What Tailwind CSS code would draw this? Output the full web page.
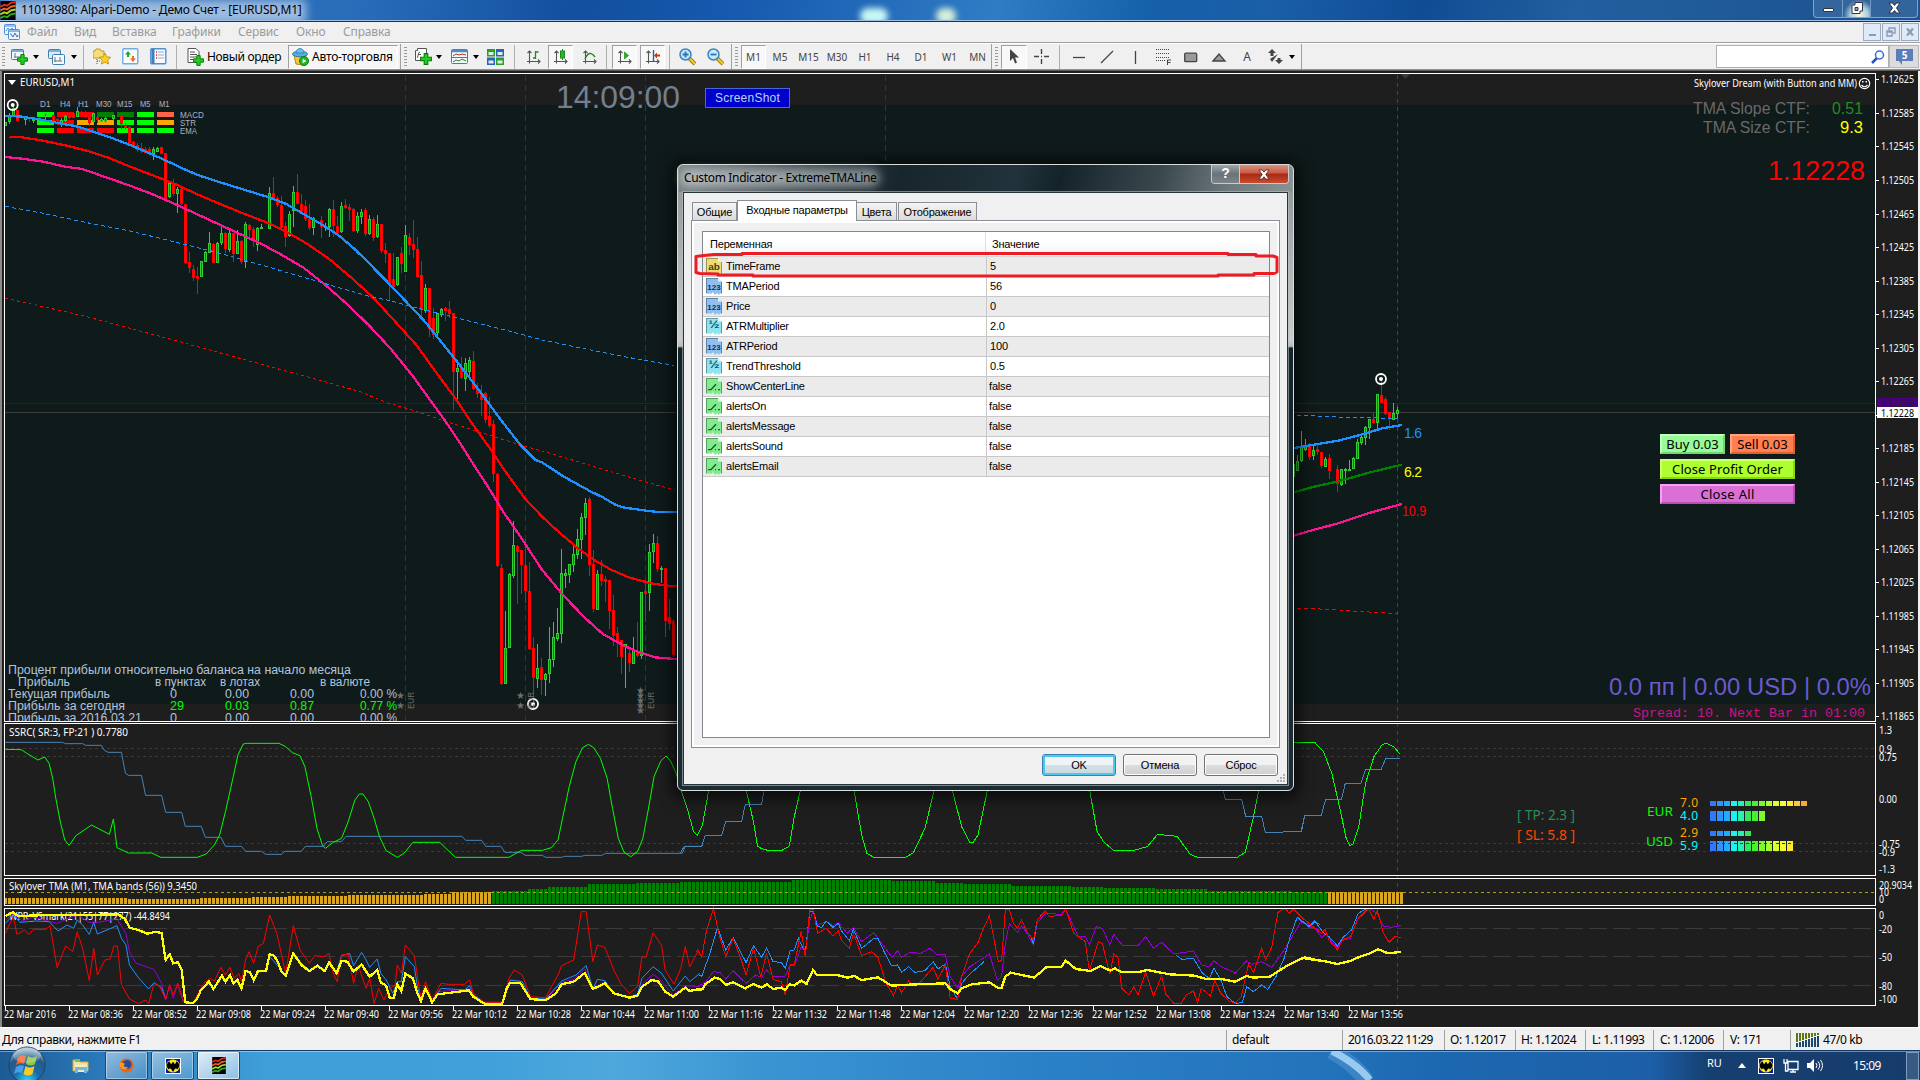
<!DOCTYPE html>
<html lang="ru">
<head>
  <meta charset="UTF-8" />
  <meta name="viewport" content="width=device-width, initial-scale=1" />
  <title>11013980: Alpari-Demo - Демо Счет - [EURUSD,M1]</title>
  <script src="https://cdn.jsdelivr.net/npm/@tailwindcss/browser@4"></script>
</head>
<body class="w-[1920px] h-[1080px] overflow-hidden bg-[#f0f0f0] font-['Noto_Sans',sans-serif] text-[12px] leading-none text-black relative">

  <!-- shared symbols -->
  <svg class="hidden">
    <symbol id="plus" viewBox="0 0 10 10"><path d="M3.5.5h3v3h3v3h-3v3h-3v-3h-3v-3h3z" fill="#1fd01f" stroke="#0a7a0a" stroke-width=".9"/></symbol>
    <symbol id="mt" viewBox="0 0 16 20"><rect width="16" height="20" fill="#000"/><g fill="none" stroke-width="2"><path d="M0 6l4-2 3 1 4-3 5-1" stroke="#e02a1a"/><path d="M0 10l4-2 3 1 4-3 5-1" stroke="#f0642a"/><path d="M0 14l4-2 3 1 4-3 5-1" stroke="#a8d820"/><path d="M0 18l4-2 3 1 4-3 5-1" stroke="#2fae20"/></g></symbol>
    <symbol id="bat" viewBox="0 0 16 16"><rect width="16" height="16" fill="#fff"/><rect x="1" y="1" width="14" height="14" fill="#16168c"/><rect x=".5" y=".5" width="15" height="15" fill="none" stroke="#fff" stroke-dasharray="1 1"/><ellipse cx="8" cy="8" rx="7" ry="6.500" fill="#f2ea28"/><path d="M1.500 7C2.500 4.500 4 3.500 5 3.500 4.500 5.500 6 6 7 5.500V4l1 .8L9 4v1.500C10 6 11.500 5.500 11 3.500 12 3.500 13.500 4.500 14.500 7 14.500 9 13 11 12 11.500 12 10 10 10 9.500 11.500L8 14 6.500 11.500C6 10 4 10 4 11.500 3 11 1.500 9 1.500 7z" fill="#000"/></symbol>
    <symbol id="axes" viewBox="0 0 16 16"><path d="M3.500 14.500V2M1.500 4l2-2 2 2M1 12.500h13M12 10.500l2 2-2 2" fill="none" stroke="#555" stroke-width="1.100"/></symbol>
    <symbol id="sheet" viewBox="0 0 16 19"><path d="M0 0h12l4 4v14l-2-1-1 2-2-2-2 2-2-3-2 2-2-1-1 1-2-1z" fill="currentColor"/><path d="M.5 17V.5H12M15.500 4.500V17" fill="none" stroke="#000" stroke-opacity=".35"/><path d="M12 0v4h4z" fill="#fff" fill-opacity=".75"/></symbol>
  </svg>

  <!-- title bar -->
  <header class="h-[20px] flex items-center justify-between relative overflow-hidden bg-gradient-to-r from-[#2a6ab8] via-[#2a74bd] to-[#1f5796]">
    <div class="absolute inset-0 bg-[linear-gradient(100deg,transparent_18%,#124f9e_30%,#1659ae_38%,#2f7cc4_52%,#1560a8_60%,#1a5fa8_66%,#0f4c94_74%,#225f9e_82%,#1c5290_100%)]"></div>
    <div class="absolute left-[860px] top-[8px] w-[28px] h-[16px] rounded-full bg-[#c8f8f4] blur-[3px]"></div>
    <div class="absolute left-[936px] top-[8px] w-[20px] h-[16px] rounded-full bg-[#d8f0d8] blur-[3px]"></div>
    <div class="absolute left-[2px] top-[0px] w-[304px] h-[24px] bg-[#b8d0ea]/80 blur-[5px]"></div>
    <div class="flex items-center relative">
      <svg class="w-[16px] h-[19px]"><use href="#mt"/></svg>
      <span class="ml-[5px] text-[12px] tracking-[-0.18px] whitespace-nowrap">11013980: Alpari-Demo - Демо Счет - [EURUSD,M1]</span>
    </div>
    <div class="relative flex self-start h-[18px] w-[105px] mr-[2px] border border-t-0 border-[#9fc0e4]/70 rounded-b bg-white/10">
      <div class="w-[29px] border-r border-[#9fc0e4]/60 flex justify-center"><i class="mt-[8px] w-[11px] h-[4px] bg-white border border-[#334] rounded-[1px]"></i></div>
      <div class="w-[28px] border-r border-[#9fc0e4]/60 flex justify-center bg-[radial-gradient(circle_at_60%_90%,#f4fbe0_0,#a8cce0_40%,transparent_70%)]"><svg class="w-[12px] h-[14px] mt-[1px]" viewBox="0 0 12 14"><path d="M4 1.500h7.500V10H9v2.500H1V4h3z" fill="#fff" stroke="#334"/><path d="M4 6.500h3v3H4z" fill="#8ab" stroke="#334"/></svg></div>
      <div class="flex-1 flex justify-center"><svg class="w-[13px] h-[12px] mt-[2px]" viewBox="0 0 13 12"><path d="M1 1h3.500l2 2.500L8.500 1H12L8.500 6l3.500 5H8.500l-2-2.500-2 2.500H1l3.500-5z" fill="#fff" stroke="#334"/></svg></div>
    </div>
  </header>
  <div class="h-px bg-[#9fbfe6]"></div>
  <div class="h-px bg-[#1c3250]"></div>

  <!-- menu -->
  <nav class="h-[20px] flex items-center text-[#9b9b9b] text-[12px] tracking-[-0.15px]">
    <svg class="w-[16px] h-[16px] ml-[4px] mr-[7px]" viewBox="0 0 16 16"><rect x=".5" y=".5" width="11" height="10" rx="1" fill="#eef5ff" stroke="#4d90d8"/><path d="M1 2h10M2 7l2-3 2 3 2-3 2 2" stroke="#4d90d8" fill="none"/><rect x="4.500" y="5.500" width="11" height="10" rx="1" fill="#eef5ff" stroke="#4d90d8"/><path d="M5 7h10M6 10h1l2 3 2-4 2 4 1-2" stroke="#2d78c8" fill="none"/></svg>
    <span class="w-[47px]">Файл</span><span class="w-[38px]">Вид</span><span class="w-[60px]">Вставка</span><span class="w-[66px]">Графики</span><span class="w-[58px]">Сервис</span><span class="w-[47px]">Окно</span><span class="w-[46px]">Справка</span>
    <div class="ml-auto flex gap-[1px] mr-[1px]">
      <div class="w-[18px] h-[18px] border border-[#9cabc0] bg-[#dfeaf8] flex items-end justify-center"><i class="w-[7px] h-[2px] bg-[#8a9bb0] mb-[4px]"></i></div>
      <div class="w-[18px] h-[18px] border border-[#9cabc0] bg-[#dfeaf8] flex items-center justify-center"><svg class="w-[10px] h-[10px]" viewBox="0 0 10 10" fill="none" stroke="#8a9bb0" stroke-width="1.400"><path d="M3 3V1h6v5H7M1 4h5v5H1zM1 5h5"/></svg></div>
      <div class="w-[18px] h-[18px] border border-[#9cabc0] bg-[#dfeaf8] flex items-center justify-center"><svg class="w-[8px] h-[8px]" viewBox="0 0 8 8" stroke="#8a9bb0" stroke-width="2.200"><path d="M1 .5l6 7M7 .5l-6 7"/></svg></div>
    </div>
  </nav>
  <div class="h-px bg-[#a0a0a0]"></div>
  <div class="h-px bg-white"></div>

  <!-- toolbar -->
  <div class="h-[25px] flex items-center text-[#333]">
    <i class="w-[3px] h-[20px] ml-[2px] mr-[6px] bg-[repeating-linear-gradient(#999_0_1px,transparent_1px_3px)]"></i>
    <div class="w-[37px] flex items-center"><svg class="w-[17px] h-[16px]" viewBox="0 0 17 16"><rect x=".5" y=".5" width="12" height="10" rx="1" fill="#f4f9ff" stroke="#3f7fae"/><path d="M1 2h11" stroke="#7ab0dc" stroke-width="2"/><path d="M4 4v5M3 8h7" stroke="#678"/><use href="#plus" x="6" y="5" width="11" height="11"/></svg><svg class="w-[6px] h-[4px] ml-[5px]" viewBox="0 0 6 4"><path d="M0 0h6L3 4z"/></svg></div>
    <div class="w-[35px] flex items-center"><svg class="w-[18px] h-[16px]" viewBox="0 0 18 16"><rect x=".5" y=".5" width="12" height="9" rx="1" fill="#dcebfa" stroke="#3f7fae"/><path d="M1 2h11" stroke="#7ab0dc" stroke-width="2"/><rect x="4.500" y="5.500" width="12" height="10" rx="1" fill="#f4f9ff" stroke="#3f7fae"/><path d="M7 8v5M6 12h8M12 8v4" stroke="#678"/></svg><svg class="w-[6px] h-[4px] ml-[5px]" viewBox="0 0 6 4"><path d="M0 0h6L3 4z"/></svg></div>
    <i class="w-px h-[24px] bg-[#b0b0b0] mr-[9px]"></i>
    <svg class="w-[18px] h-[18px] mr-[11px]" viewBox="0 0 18 18"><path d="M0 3h2l1-2h4l1 2h3v7H0z" fill="#f7dc78" stroke="#c09a28"/><path d="M4 11v5M4 13h3" stroke="#555" stroke-dasharray="1 1"/><path d="M12 5l1.800 3.800 4 .5-3 2.800.8 4L12 14.200 8.400 16.100l.8-4-3-2.800 4-.5z" fill="#fbd024" stroke="#c08a10" stroke-width=".8"/></svg>
    <svg class="w-[17px] h-[17px] mr-[11px]" viewBox="0 0 17 17"><rect x=".8" y=".8" width="15" height="15" rx="1" fill="#f8fbff" stroke="#6faee0" stroke-width="1.400"/><path d="M6 3L3 6.500h2V9h2V6.500h2z" fill="#23a823"/><path d="M11 14l3-3.500h-2V8h-2v2.500H8z" fill="#f06a20"/></svg>
    <svg class="w-[17px] h-[17px] mr-[9px]" viewBox="0 0 17 17"><rect x=".8" y=".8" width="15" height="15" rx="1" fill="#f8fbff" stroke="#4f8fd0" stroke-width="1.400"/><path d="M3 1v15" stroke="#3f7fc0" stroke-width="3"/><path d="M6 4h1M6 7h1M6 10h1" stroke="#e02020" stroke-width="1.500"/><path d="M8 4h6M8 7h6M8 10h6" stroke="#9ac"/></svg>
    <i class="w-px h-[24px] bg-[#b0b0b0] mr-[10px]"></i>
    <svg class="w-[17px] h-[18px] mr-[3px]" viewBox="0 0 17 18"><path d="M1 .5h8l3 3v11H1z" fill="#fff" stroke="#555"/><path d="M3 4h5M3 6.500h7M3 9h7M3 11.500h4" stroke="#555"/><use href="#plus" x="6" y="7" width="11" height="11"/></svg>
    <span class="w-[81px] text-black tracking-[-0.35px] whitespace-nowrap text-[12px]">Новый ордер</span>
    <div class="h-[24px] w-[110px] border border-[#a0a0a0] border-r-white border-b-white bg-[#f6f6f6] flex items-center pl-[3px]">
      <svg class="w-[17px] h-[18px] mr-[3px]" viewBox="0 0 17 18"><path d="M2 7l2 9 7 1 3-10z" fill="#f5c830" stroke="#b88a18"/><ellipse cx="8" cy="6" rx="7.500" ry="2.800" fill="#5aaede" stroke="#2b7ab0"/><path d="M4 5c0-6 8-6 8 0z" fill="#6cc0ea" stroke="#2b7ab0" stroke-width=".8"/><circle cx="12" cy="13" r="4.500" fill="#22b822" stroke="#0d7a0d"/><path d="M10.700 10.700v4.600l3.600-2.300z" fill="#fff"/></svg>
      <span class="text-black text-[12px] tracking-[-0.2px] whitespace-nowrap">Авто-торговля</span>
    </div>
    <i class="w-px h-[25px] bg-[#a0a0a0] ml-[2px] mr-[3px]"></i>
    <i class="w-[3px] h-[20px] mr-[8px] bg-[repeating-linear-gradient(#999_0_1px,transparent_1px_3px)]"></i>
    <div class="w-[36px] flex items-center"><svg class="w-[17px] h-[17px]" viewBox="0 0 17 17"><path d="M.500 2.500h2V.500h9v12h-11z" fill="#fff" stroke="#555"/><path d="M5 4c-2 0-2 6-3 6M3 6.500h3" stroke="#555" fill="none"/><use href="#plus" x="5" y="5" width="12" height="12"/></svg><svg class="w-[6px] h-[4px] ml-[4px]" viewBox="0 0 6 4"><path d="M0 0h6L3 4z"/></svg></div>
    <div class="w-[36px] flex items-center"><svg class="w-[17px] h-[16px]" viewBox="0 0 17 16"><rect x=".5" y=".5" width="16" height="14" rx="1" fill="#f4f9ff" stroke="#3f7fae"/><path d="M1 2h15" stroke="#4a90c8" stroke-width="2.500"/><path d="M2 7l3-2 3 1 3-1 4 1" stroke="#c02a1a" fill="none"/><path d="M1 8.500h15" stroke="#3f7fae"/><path d="M2 13l3-2 3 1 3-2 4 2" stroke="#208a20" fill="none"/></svg><svg class="w-[6px] h-[4px] ml-[5px]" viewBox="0 0 6 4"><path d="M0 0h6L3 4z"/></svg></div>
    <svg class="w-[17px] h-[16px] mr-[10px]" viewBox="0 0 17 16"><path d="M0 0h8v7.500H0zM9 8.500h8V16H9z" fill="#2aa02a"/><path d="M9 0h8v7.500H9zM0 8.500h8V16H0z" fill="#2a62c0"/><path d="M1.500 3h5v3h-5zM10.500 3h5v3h-5zM1.500 11.500h5v3h-5zM10.500 11.500h5v3h-5z" fill="#dff0e0"/></svg>
    <i class="w-px h-[24px] bg-[#b0b0b0] mr-[11px]"></i>
    <svg class="w-[16px] h-[16px] mr-[6px]" viewBox="0 0 16 16"><use href="#axes"/><path d="M9.500 2v8M9.500 3h3M7 9h3" stroke="#208a20" stroke-width="1.300"/></svg>
    <div class="w-[25px] h-[24px] border border-[#a0a0a0] border-r-white border-b-white bg-[#f8f8f8] flex items-center justify-center mr-[9px]"><svg class="w-[16px] h-[16px]" viewBox="0 0 16 16"><use href="#axes"/><path d="M9.500 0v11" stroke="#208a20"/><rect x="7.500" y="2" width="4" height="7" fill="#1fb81f" stroke="#208a20"/></svg></div>
    <svg class="w-[16px] h-[16px] mr-[8px]" viewBox="0 0 16 16"><use href="#axes"/><path d="M3 10c3-7 6-7 10-2" fill="none" stroke="#208a20" stroke-width="1.300"/></svg>
    <i class="w-px h-[24px] bg-[#b0b0b0] mr-[5px]"></i>
    <div class="w-[25px] h-[24px] border border-[#a0a0a0] border-r-white border-b-white bg-[#f8f8f8] flex items-center justify-center mr-[3px]"><svg class="w-[16px] h-[16px]" viewBox="0 0 16 16"><use href="#axes"/><path d="M7.500 3v7l4-3.500z" fill="#1fb81f" stroke="#208a20" stroke-width=".7"/></svg></div>
    <div class="w-[25px] h-[24px] border border-[#a0a0a0] border-r-white border-b-white bg-[#f8f8f8] flex items-center justify-center mr-[4px]"><svg class="w-[16px] h-[16px]" viewBox="0 0 16 16"><use href="#axes"/><path d="M8.500 1v11" stroke="#2060a0" stroke-width="1.400"/><path d="M9 6.500l3-3v2h3v2h-3v2z" fill="#c03a10"/></svg></div>
    <i class="w-px h-[24px] bg-[#b0b0b0] mr-[9px]"></i>
    <svg class="w-[17px] h-[18px] mr-[11px]" viewBox="0 0 17 18"><path d="M10 10l6 6" stroke="#a87a10" stroke-width="4"/><path d="M10 10l6 6" stroke="#f2cc30" stroke-width="2"/><circle cx="6.500" cy="6.500" r="5.500" fill="#c8e8fa" stroke="#3a84c0" stroke-width="1.500"/><path d="M3.500 6.500h6M6.500 3.500v6" stroke="#2a74b8" stroke-width="1.800"/></svg>
    <svg class="w-[17px] h-[18px] mr-[7px]" viewBox="0 0 17 18"><path d="M10 10l6 6" stroke="#a87a10" stroke-width="4"/><path d="M10 10l6 6" stroke="#f2cc30" stroke-width="2"/><circle cx="6.500" cy="6.500" r="5.500" fill="#c8e8fa" stroke="#3a84c0" stroke-width="1.500"/><path d="M3.500 6.500h6" stroke="#2a74b8" stroke-width="1.800"/></svg>
    <i class="w-px h-[25px] bg-[#a0a0a0] mr-[3px]"></i>
    <i class="w-[3px] h-[20px] mr-[3px] bg-[repeating-linear-gradient(#999_0_1px,transparent_1px_3px)]"></i>
    <div class="flex items-center text-center text-[10px] text-[#444]">
      <span class="w-[25px] h-[24px] leading-[22px] border border-[#a0a0a0] border-r-white border-b-white bg-[#f8f8f8]">M1</span>
      <span class="w-[28px]">M5</span><span class="w-[29px]">M15</span><span class="w-[28px]">M30</span><span class="w-[28px]">H1</span><span class="w-[28px]">H4</span><span class="w-[28px]">D1</span><span class="w-[29px]">W1</span><span class="w-[27px]">MN</span>
    </div>
    <i class="w-px h-[25px] bg-[#a0a0a0] mr-[3px]"></i>
    <i class="w-[3px] h-[20px] mr-[3px] bg-[repeating-linear-gradient(#999_0_1px,transparent_1px_3px)]"></i>
    <div class="w-[26px] h-[24px] border border-[#a0a0a0] border-r-white border-b-white bg-[#f8f8f8] flex items-center justify-center mr-[7px]"><svg class="w-[10px] h-[15px]" viewBox="0 0 10 15"><path d="M1 0v12l3-3 2 5.500 2-1L6 8.500h4z" fill="#444"/></svg></div>
    <svg class="w-[15px] h-[15px] mr-[10px]" viewBox="0 0 15 15"><path d="M7.500 0v5M7.500 10v5M0 7.500h5M10 7.500h5M7 7.500h1" stroke="#444" stroke-width="1.400"/></svg>
    <i class="w-px h-[24px] bg-[#b0b0b0] mr-[5px]"></i>
    <div class="flex items-center">
      <svg class="w-[28px] h-[16px]" viewBox="0 0 28 16"><path d="M8 8.500h12" stroke="#444" stroke-width="1.300"/></svg>
      <svg class="w-[28px] h-[16px]" viewBox="0 0 28 16"><path d="M8 14L20 2" stroke="#444" stroke-width="1.300"/></svg>
      <svg class="w-[28px] h-[16px]" viewBox="0 0 28 16"><path d="M14.500 2v13" stroke="#444" stroke-width="1.300"/></svg>
      <svg class="w-[28px] h-[17px]" viewBox="0 0 28 17"><path d="M7 1.500h14M7 5.500h14M7 9.500h14M7 12.500h9" stroke="#444" stroke-dasharray="1 1"/><path d="M18.500 17v-5h3.500M18.500 14.500h3" fill="none" stroke="#444"/></svg>
      <svg class="w-[28px] h-[16px]" viewBox="0 0 28 16"><rect x="7.700" y="4.200" width="12" height="8.500" rx="1" fill="#999" stroke="#444" stroke-width="1.300"/></svg>
      <svg class="w-[28px] h-[16px]" viewBox="0 0 28 16"><path d="M8 12l6-7 6 7z" fill="#999" stroke="#444" stroke-width="1.300"/></svg>
      <span class="w-[28px] text-center text-[12px] text-[#444]">A</span>
      <svg class="w-[28px] h-[16px]" viewBox="0 0 28 16"><path d="M11 0l4 4h-2.500v3h-3V4H7zM18 15l4-4h-2.500V9h-3v2H14zM9 10l2 3 6-8" fill="#444"/></svg>
      <svg class="w-[6px] h-[4px]" viewBox="0 0 6 4"><path d="M0 0h6L3 4z"/></svg>
    </div>
    <i class="w-px h-[25px] bg-[#a0a0a0] ml-[6px]"></i>
    <div class="ml-auto w-[173px] h-[23px] bg-white border border-[#b0b0b0] flex items-center justify-end pr-[3px]"><svg class="w-[14px] h-[14px]" viewBox="0 0 14 14"><path d="M6 8l-5 5" stroke="#2a50c0" stroke-width="2.500"/><circle cx="8.500" cy="5" r="4" fill="#fff" stroke="#3a6ad0" stroke-width="1.500"/></svg></div>
    <div class="w-[30px] h-[23px] border border-[#b8b8b8] bg-[#dcdcdc] flex items-center justify-center mr-[1px]"><svg class="w-[17px] h-[16px]" viewBox="0 0 17 16"><path d="M0 0h17v12H6v4l-3-4H0z" fill="#5b7db8"/><text x="8.500" y="10" text-anchor="middle" font-size="10" font-weight="700" fill="#fff">5</text></svg></div>
  </div>
  <div class="h-px bg-[#909090]"></div>
  <div class="h-px bg-[#5c5c5c]"></div>

  <!-- chart window -->
  <main class="h-[956px] flex bg-[#1e1e1e] border-l-2 border-[#8a8a8a] border-r-2 border-r-[#f0f0f0]">
    <svg id="chart" class="w-[1916px] h-[956px]" viewBox="2 71 1916 956" font-family="'Noto Sans', sans-serif" font-size="11" fill="#fff">
      <rect x="5" y="105" width="1870" height="599" fill="#0f1a1a"/>
      <g shape-rendering="crispEdges" fill="none">
        <path d="M405.500 75V720M525.500 75V720M645.500 75V720M885.500 75V720" stroke="#2c3838" stroke-dasharray="6 4"/>
        <path d="M1397.500 75V1004" stroke="#4e4e00" stroke-dasharray="4 4"/>
        <path d="M5 403.500H1875" stroke="#4b0082"/>
        <path d="M5 412.500H1875" stroke="#3c3c3c"/>
        <path d="M5 748.500H1875M5 756.500H1875M5 843.500H1875M5 851.500H1875" stroke="#3a3a3a" stroke-dasharray="3 3"/>
        <path d="M5 928.500H1875M5 956.500H1875M5 985.500H1875" stroke="#3a3a3a" stroke-dasharray="18 6"/>
      </g>
      <path d="M1401 74h9l-4.500 5z" fill="#3a3a42"/>

      <g id="signals" font-family="Liberation Sans, sans-serif" font-size="9" fill="#a8b4c4"></g>

      <!-- candles and TMA bands, upper left -->
      <g transform="translate(0 90) scale(.4337 .33333)" shape-rendering="crispEdges">
        <g id="candlesTop"></g>
        <g fill="none" stroke-width="2.300">
          <polyline vector-effect="non-scaling-stroke" stroke="#1e90ff" points="12,77 50,80 90,88 130,98 180,110 215,125 260,145 300,165 345,190 380,210 420,235 460,257 510,278 560,298 620,322 660,342 700,372 740,402 780,435 820,480 860,532 900,585 940,640 980,695 1020,760 1060,825 1110,910 1155,990"/>
          <polyline vector-effect="non-scaling-stroke" stroke="#f00" points="22,140 50,142 100,152 150,166 200,182 250,203 300,230 350,255 400,280 450,310 500,338 560,370 620,400 660,425 710,463 760,508 810,563 860,622 910,693 960,765 1010,855 1050,925 1083,990"/>
          <polyline vector-effect="non-scaling-stroke" stroke="#ff1493" points="12,201 50,206 100,215 150,230 190,237 240,260 300,287 350,312 400,340 450,370 500,400 550,430 600,460 650,495 700,533 750,585 800,642 850,705 900,775 950,855 1000,945 1025,990"/>
          <polyline vector-effect="non-scaling-stroke" stroke="#1e90ff" stroke-width="1" stroke-dasharray="4 3" points="12,349 100,370 200,398 300,423 400,455 500,487 600,524 700,562 800,600 860,622 900,632 950,650 1050,683 1150,715 1250,750 1400,790 1480,810 1555,826"/>
          <polyline vector-effect="non-scaling-stroke" stroke="#f00" stroke-width="1" stroke-dasharray="3 3" points="12,625 100,650 200,680 400,750 600,822 740,872 830,905 890,937 950,960 1030,995 1110,1028 1200,1065 1300,1102 1400,1142 1500,1180 1555,1200"/>
        </g>
      </g>
      <!-- lower left -->
      <g transform="translate(0 420) scale(.4337 .33333)" shape-rendering="crispEdges">
        <g id="candlesLow"></g>
        <g fill="none" stroke-width="2.300">
          <polyline vector-effect="non-scaling-stroke" stroke="#1e90ff" points="1155,0 1200,75 1235,120 1250,127 1300,170 1360,213 1390,232 1420,255 1440,263 1490,272 1510,275 1575,276"/>
          <polyline vector-effect="non-scaling-stroke" stroke="#f00" points="1083,0 1135,95 1160,145 1210,235 1250,290 1290,338 1330,382 1370,420 1410,450 1450,472 1500,490 1540,497 1575,498"/>
          <polyline vector-effect="non-scaling-stroke" stroke="#ff1493" points="1025,0 1060,68 1100,150 1130,210 1160,275 1200,350 1250,450 1300,528 1350,595 1390,642 1440,678 1470,695 1510,712 1575,719"/>
        </g>
      </g>
      <!-- last bars -->
      <g transform="translate(1290 340) scale(.40177 .33333)" shape-rendering="crispEdges">
        <g id="candlesLast"></g>
        <g fill="none" stroke-width="2.300">
          <polyline vector-effect="non-scaling-stroke" stroke="#1e90ff" points="0,326 70,312 120,302 180,283 230,265 278,255"/>
          <polyline vector-effect="non-scaling-stroke" stroke="#008000" points="0,460 60,440 120,424 200,397 278,374"/>
          <polyline vector-effect="non-scaling-stroke" stroke="#ff1493" points="0,590 60,569 120,550 200,518 278,492"/>
          <polyline vector-effect="non-scaling-stroke" stroke="#1e90ff" stroke-width="1" stroke-dasharray="4 3" points="0,226 70,228 130,232 270,235"/>
          <polyline vector-effect="non-scaling-stroke" stroke="#f00" stroke-width="1" stroke-dasharray="4 3" points="0,804 100,808 180,815 270,821"/>
        </g>
      </g>

      <!-- markers -->
      <g fill="none" stroke="#fff" stroke-width="1.800"><circle cx="12.700" cy="105" r="5"/><circle cx="533" cy="704" r="5"/><circle cx="1381" cy="379" r="5"/></g>
      <circle cx="12.700" cy="105" r="2"/><circle cx="533" cy="704" r="2"/><circle cx="1381" cy="379" r="2"/>

      <g id="news" fill="#6e6e6e" font-family="DejaVu Sans, sans-serif" font-size="10"></g>

      <!-- SSRC -->
      <g transform="translate(0 715) scale(.44643 .33333)" fill="none" shape-rendering="crispEdges">
        <polyline vector-effect="non-scaling-stroke" stroke="#4682b4" points="12,82 140,82 147,86 185,86 192,91 227,91 233,105 242,112 272,112 281,175 288,181 317,181 326,241 362,241 371,292 407,292 415,334 451,334 460,367 495,367 505,394 541,394 550,409 586,409 595,418 631,418 637,409 675,409 684,394 724,394 733,380 765,380 775,364 1035,364 1043,376 1079,376 1088,394 1122,394 1131,412 1167,412 1176,421 1215,421 1222,427 1258,427 1265,424 1303,424 1310,421 1348,421 1356,415 1528,415 1535,394 1568,394"/>
        <polyline vector-effect="non-scaling-stroke" stroke="#0f0" points="12,103 48,104 60,115 85,135 100,126 110,145 118,190 125,250 135,320 145,375 155,391 170,362 205,330 245,358 254,312 262,398 288,414 340,414 360,427 442,427 462,417 480,390 492,360 505,290 520,200 533,120 545,87 552,85 625,85 640,95 655,113 672,122 683,155 697,245 710,340 722,390 729,400 745,383 765,370 780,320 795,255 805,237 813,237 825,260 838,310 850,365 865,407 890,427 905,415 925,382 985,382 1020,427 1140,427 1168,406 1215,406 1235,398 1250,375 1260,310 1275,215 1290,140 1305,98 1318,88 1330,98 1345,130 1360,190 1372,280 1385,370 1398,412 1413,425 1428,410 1440,370 1452,285 1465,185 1480,138 1492,123 1502,138 1513,170 1528,230"/>
      </g>
      <g transform="translate(680 720) scale(.40816 .33333)" fill="none" shape-rendering="crispEdges">
        <path vector-effect="non-scaling-stroke" stroke="#4682b4" d="M0 400L10 380H53L62 346H102L112 304H151L160 253H200L207 200M1329 200L1336 238H1376L1386 289H1425L1434 337H1475L1480 334H1523L1530 287H1568"/>
        <path vector-effect="non-scaling-stroke" stroke="#0f0" d="M0 200L20 275 33 335 43 346 55 315 72 200M160 200L180 305 190 378 200 386 215 391H250L268 378 280 290 297 200M425 200L445 345 458 400 475 412H553L572 398 600 325 625 200M665 200L690 320 710 367H718L730 345 755 200M1002 200L1022 335 1038 365 1062 391H1112L1145 380 1170 343 1218 349 1250 403 1268 412H1365L1385 397 1405 290 1420 200"/>
      </g>
      <g transform="translate(1040 700) scale(.56122 .33333)" fill="none" shape-rendering="crispEdges">
        <path vector-effect="non-scaling-stroke" stroke="#4682b4" d="M465 395L472 347H501L509 298H537L544 250H572L580 208H608L616 175H642"/>
        <path vector-effect="non-scaling-stroke" stroke="#0f0" d="M440 128H490L505 155 520 220 535 330 545 412 552 436 558 432 568 380 580 250 595 170 610 133 618 130 630 140 642 163"/>
      </g>

      <!-- TMA histogram -->
      <g id="hist" shape-rendering="crispEdges"></g>
      <path d="M5 892.500H1875" stroke="#a8a020" stroke-dasharray="3 3" shape-rendering="crispEdges"/>

      <text x="9" y="920" textLength="161" lengthAdjust="spacingAndGlyphs">WPR_VSmark(21|55|77|277) -44.8494</text>

      <!-- WPR -->
      <g transform="translate(0 715) scale(.44643 .33333)" fill="none" shape-rendering="crispEdges">
        <polyline vector-effect="non-scaling-stroke" stroke="#9400d3" points="12,615 30,597 50,618 75,607 128,625 145,615 173,600 200,622 218,622 262,612 282,655 290,710 305,745 345,763 362,805 371,855 380,808 388,850 398,805 410,860 433,862"/>
        <polyline vector-effect="non-scaling-stroke" stroke="#9400d3" points="968,860 980,830 1050,822 1060,842 1085,864 1125,864 1143,798 1165,798 1188,850 1222,854 1258,802 1285,793 1310,762 1328,820 1355,800 1375,835 1410,846 1428,840 1440,805 1463,778 1475,790 1508,840 1535,812 1568,815"/>
        <polyline vector-effect="non-scaling-stroke" stroke="#1e90ff" points="12,625 30,600 45,622 80,618 110,620 130,648 150,630 165,640 173,615 185,630 200,658 210,622 218,657 245,642 262,632 272,670 282,690 290,750 310,788 333,822 345,803 362,818 371,850"/>
        <polyline vector-effect="non-scaling-stroke" stroke="#1e90ff" points="600,718 640,780 657,712 675,745 693,765 711,750 727,765 737,742 754,770 765,722 783,715 792,752 810,712 820,735 828,757 845,732 853,775 865,795 880,835 890,800 899,800 908,725 928,755 935,815 943,853 953,815 968,858 988,820 1040,825 1052,812 1060,840 1085,862 1125,862 1143,795 1170,800 1188,850 1222,852 1258,798 1290,780 1313,752 1328,822 1338,793 1355,797 1375,835 1410,845 1428,838 1438,790 1463,755 1482,775 1508,828 1535,783 1545,800 1568,775"/>
        <polyline vector-effect="non-scaling-stroke" stroke="#f00" points="12,655 22,625 30,607 38,658 55,645 65,658 75,643 103,643 112,632 128,758 147,693 163,710 173,650 185,700 200,797 210,700 218,780 235,735 247,732 255,693 263,693 272,808 290,852 310,866 326,855 333,866 345,805 358,815 371,853 380,810 388,840 398,805 410,855 415,866 433,862 450,820 460,800 470,790 480,798 495,757 505,780 515,757 525,790 535,775 541,800 550,735 558,710 568,745 578,695 590,685 604,600 620,655 640,775 657,632 672,705 693,745 705,722 725,725 737,715 745,770 755,800 765,720 780,718 792,805 802,750 820,820 828,790 838,866 848,820 860,855 873,820 885,810 890,750 899,775 908,690 928,722 943,853 953,800 968,855 988,805 1005,808 1040,808 1052,795 1060,835 1085,862 1125,862 1140,790 1152,765 1170,780 1188,845 1222,848 1250,780 1258,752 1285,735 1302,590 1313,590 1328,740 1338,690 1355,697 1375,765 1390,805 1410,835 1428,815 1438,725 1447,727 1463,653 1482,692 1490,765 1510,808 1525,760 1535,695 1545,755 1565,705"/>
        <polyline vector-effect="non-scaling-stroke" stroke="#ff0" stroke-width="2.300" points="12,603 30,592 40,603 110,600 180,600 265,598 280,612 290,638 310,645 330,656 350,650 362,655 371,735 380,718 388,745 398,742 407,765 415,862 433,864 442,850 450,825 468,800 478,822 497,782 505,800 515,780 523,805 532,795 541,820 550,768 560,772 568,795 578,768 596,768 604,718 614,722 622,740 630,768 640,782 657,715 675,750 693,768 711,752 727,768 737,742 754,775 765,738 778,740 792,770 810,748 818,765 828,785 845,765 853,803 865,812 873,848 882,848 890,808 899,828 908,776 925,790 935,835 943,858 953,820 968,862 980,838 1010,833 1050,826 1060,845 1085,866 1125,866 1135,820 1143,803 1165,803 1188,852 1222,856 1245,835 1258,808 1285,800 1310,774 1328,822 1355,805 1375,835 1410,848 1428,842 1438,815 1460,795 1475,800 1490,830 1508,845 1535,818 1545,828 1568,822"/>
      </g>
      <g transform="translate(680 720) scale(.40816 .33333)" fill="none" shape-rendering="crispEdges">
        <polyline vector-effect="non-scaling-stroke" stroke="#9400d3" points="40,800 60,790 82,755 98,758 112,777 130,752 162,790 185,765 200,772 212,750 230,770 258,768 268,738 280,738 297,680 307,695 318,600 327,572 337,615 358,605 375,617 388,608 410,640 425,622 445,665 475,638 500,680 520,712 533,692 543,712 563,697 590,700 612,685 630,705 650,705 662,770 680,803 690,770 710,740 745,713 758,702 778,782 788,770 797,670 807,612 827,638 837,617 850,640 866,675 875,610 895,580 935,583 945,567 975,648 993,650 1003,675 1020,620 1035,625 1053,675 1063,643 1083,675 1122,677 1141,650 1160,685 1180,667 1210,702 1258,693 1278,735 1297,740 1308,722 1325,740 1345,750 1360,760 1388,723 1400,733 1425,725 1450,742 1480,690 1520,608 1535,610 1550,622 1568,630"/>
        <path vector-effect="non-scaling-stroke" stroke="#1e90ff" d="M48 765L53 770 72 705 92 622 112 690 130 653 162 728 180 677 200 712 212 683 228 725 248 727 258 745 270 692 280 690 290 655 307 697 318 573 327 575 337 620 347 622 358 603 375 622 388 610 395 632 415 662 425 628 445 685 475 655 485 655 500 695 518 737 533 735 543 757 560 740 575 757 600 752 620 725 632 747 650 732 662 800 680 837 690 790 710 762 745 725M860 650L866 672 875 600 895 572M1215 705L1230 718 1258 715 1280 760 1297 775 1308 745 1325 780 1340 830 1360 850 1378 848 1388 800 1405 815 1425 795 1440 808 1460 770 1480 715 1495 650 1512 592 1540 620 1555 603 1568 615"/>
        <polyline vector-effect="non-scaling-stroke" stroke="#f00" points="40,697 43,690 53,712 65,632 82,565 95,640 112,710 130,655 150,720 162,765 180,685 198,770 212,700 228,778 248,785 258,825 270,735 280,735 297,632 307,710 318,567 327,570 337,640 358,625 375,648 388,632 395,660 415,685 425,640 445,707 470,695 485,712 505,790 523,827 533,795 543,818 560,783 575,797 590,785 620,742 632,778 650,735 662,835 680,838 690,770 710,700 730,668 740,635 758,587 780,725 788,722 797,570 807,570 817,610 827,625 837,600 850,635 866,660 875,600 895,573 905,590 935,585 945,567 965,640 993,665 1003,752 1025,665 1035,672 1053,763 1063,702 1073,712 1082,805 1100,825 1112,800 1122,825 1141,757 1160,828 1180,767 1190,822 1210,850 1228,850 1240,825 1258,813 1268,848 1277,805 1300,828 1310,780 1325,820 1345,843 1360,850 1375,830 1393,732 1405,757 1425,685 1435,720 1450,680 1465,577 1482,565 1493,580 1503,567 1530,600"/>
        <polyline vector-effect="non-scaling-stroke" stroke="#ff0" stroke-width="2.300" points="43,810 55,808 62,793 85,773 98,777 112,795 130,787 160,805 180,792 200,803 213,793 228,807 248,803 258,810 268,793 280,796 297,782 310,792 326,750 335,764 385,765 410,773 427,768 445,780 485,772 518,797 560,794 650,790 662,807 680,820 690,805 715,793 758,787 778,803 788,803 797,770 810,758 868,773 897,742 935,740 945,722 970,747 1005,753 1030,738 1055,752 1065,745 1080,755 1120,757 1145,750 1200,763 1260,767 1290,777 1330,778 1360,785 1388,768 1405,773 1445,770 1490,735 1530,712 1568,722"/>
      </g>
      <g transform="translate(1040 700) scale(.56122 .33333)" fill="none" shape-rendering="crispEdges">
        <polyline vector-effect="non-scaling-stroke" stroke="#9400d3" points="465,670 470,665 478,682 490,685 502,713 510,700 520,725 530,745 537,722 553,715 565,660 587,625 601,640 612,678 625,682 643,677"/>
        <polyline vector-effect="non-scaling-stroke" stroke="#1e90ff" points="460,652 465,660 480,680 490,665 505,698 515,710 530,738 540,712 555,690 567,640 582,625"/>
        <polyline vector-effect="non-scaling-stroke" stroke="#f00" points="452,625 465,650 490,685 502,700 508,688 515,720 530,750 540,718 553,710 567,655 585,625 595,658 601,630 612,700 622,727 632,710 643,712"/>
        <polyline vector-effect="non-scaling-stroke" stroke="#ff0" stroke-width="2.300" points="467,774 472,775 490,780 505,783 530,792 553,783 570,770 585,762 603,748 620,760 643,756"/>
      </g>

      <!-- frames -->
      <g fill="none" stroke="#fff" shape-rendering="crispEdges">
        <path d="M4.500 73.500H1875.500V721.500H4.500z"/>
        <path d="M4.500 723.500H1875.500V875.500H4.500z"/>
        <path d="M4.500 878.500H1875.500V905.500H4.500z"/>
        <path d="M4.500 908.500H1875.500V1005.500H4.500z"/>
      </g>
      <g id="axis" font-size="10.500"></g>

      <!-- labels on the price chart -->
      <path d="M8 80h8l-4 5z"/>
      <text x="20" y="86" textLength="55" lengthAdjust="spacingAndGlyphs">EURUSD,M1</text>
      <text x="1694" y="87" textLength="163" lengthAdjust="spacingAndGlyphs">Skylover Dream (with Button and MM)</text>
      <g fill="none" stroke="#fff" stroke-width="1.200"><circle cx="1864.500" cy="83.500" r="5.200"/><path d="M1861.500 85q3 3.500 6 0"/></g><path d="M1862 81h1.500v1.500h-1.500zM1865.500 81h1.500v1.500h-1.500z"/>
      <g font-family="Liberation Sans, sans-serif">
        <text x="556" y="108" font-size="31" fill="#708090" textLength="124" lengthAdjust="spacingAndGlyphs">14:09:00</text>
        <g font-size="17" fill="#696969">
          <text x="1693" y="114" textLength="117" lengthAdjust="spacingAndGlyphs">TMA Slope CTF:</text>
          <text x="1703" y="133" textLength="107" lengthAdjust="spacingAndGlyphs">TMA Size CTF:</text>
          <text x="1832" y="114" fill="#228b22" textLength="31" lengthAdjust="spacingAndGlyphs">0.51</text>
          <text x="1840" y="133" fill="#ff0" textLength="23" lengthAdjust="spacingAndGlyphs">9.3</text>
        </g>
        <text x="1768" y="180" font-size="28" fill="#f00" textLength="97" lengthAdjust="spacingAndGlyphs">1.12228</text>
        <g font-size="14">
          <text x="1404" y="438" fill="#1e90ff" textLength="18">1.6</text>
          <text x="1404" y="477" fill="#ff0" textLength="18">6.2</text>
          <text x="1402" y="516" fill="#f00" textLength="24" lengthAdjust="spacingAndGlyphs">10.9</text>
        </g>
        <text x="1609" y="695" font-size="23" fill="#6a5acd" textLength="262" lengthAdjust="spacingAndGlyphs">0.0 пп | 0.00 USD | 0.0%</text>
        <g id="profit" font-size="12.500" fill="#b0c4de"></g>
      </g>
      <text x="1633" y="717" font-family="Liberation Mono, monospace" font-size="13" fill="#c71585" textLength="232" lengthAdjust="spacingAndGlyphs">Spread: 10. Next Bar in 01:00</text>

      <text x="9" y="736" textLength="119" lengthAdjust="spacingAndGlyphs">SSRC( SR:3, FP:21 ) 0.7780</text>
      <text x="9" y="890" textLength="188" lengthAdjust="spacingAndGlyphs">Skylover TMA (M1, TMA bands (56)) 9.3450</text>

      <g font-size="14">
        <text x="1517" y="820" fill="#2e8b57" textLength="58" lengthAdjust="spacingAndGlyphs">[ TP: 2.3 ]</text>
        <text x="1517" y="840" fill="#ff4500" textLength="58" lengthAdjust="spacingAndGlyphs">[ SL: 5.8 ]</text>
      </g>
      <g font-size="13" fill="#0f0">
        <text x="1647" y="816" textLength="26" lengthAdjust="spacingAndGlyphs">EUR</text>
        <text x="1646" y="846" textLength="27" lengthAdjust="spacingAndGlyphs">USD</text>
      </g>
      <g font-size="12">
        <text x="1680" y="807" fill="#ffa500" textLength="18">7.0</text><text x="1680" y="820" fill="#0ff" textLength="18">4.0</text>
        <text x="1680" y="837" fill="#ffa500" textLength="18">2.9</text><text x="1680" y="850" fill="#0ff" textLength="18">5.9</text>
      </g>
      <g id="strength"></g>
    </svg>
  </main>

  <!-- chart buttons -->
  <div class="absolute left-[705px] top-[88px] w-[85px] h-[20px] bg-[#0000cd] border border-[#4169e1] text-[#b8d4f4] text-center text-[12px] tracking-[0.25px] leading-[19px] font-['Liberation_Sans',sans-serif]">ScreenShot</div>
  <div class="absolute left-[1660px] top-[434px] w-[135px] grid grid-cols-2 gap-[5px] text-center text-[13px] leading-[16px] whitespace-nowrap">
    <div class="h-[20px] bg-[#98fb98] border-2 border-[#bdfdbd] border-r-[#6fd86f] border-b-[#6fd86f]">Buy 0.03</div>
    <div class="h-[20px] bg-[#ff7f50] border-2 border-[#ffa380] border-r-[#e06030] border-b-[#e06030]">Sell 0.03</div>
    <div class="h-[20px] col-span-2 bg-[#adff2f] border-2 border-[#ceff70] border-r-[#8ad818] border-b-[#8ad818] tracking-[0.1px]">Close Profit Order</div>
    <div class="h-[20px] col-span-2 bg-[#da70d6] border-2 border-[#f8a0f4] border-r-[#b850b4] border-b-[#b850b4] tracking-[0.3px]">Close All</div>
  </div>

  <!-- status bar -->
  <footer class="h-[23px] flex items-center bg-[#f0f0f0] border-t border-white pt-px text-[12px] whitespace-nowrap">
    <span class="w-[1226px] pl-[2px] tracking-[-0.4px]">Для справки, нажмите F1</span>
    <span class="w-[116px] h-[20px] leading-[19px] border-l border-[#a0a0a0] pl-[5px] tracking-[-0.4px]">default</span>
    <span class="w-[102px] h-[20px] leading-[19px] border-l border-[#a0a0a0] pl-[5px] tracking-[-0.65px]">2016.03.22 11:29</span>
    <span class="w-[71px] h-[20px] leading-[19px] border-l border-[#a0a0a0] pl-[5px] tracking-[-0.45px]">O: 1.12017</span>
    <span class="w-[70px] h-[20px] leading-[19px] border-l border-[#a0a0a0] pl-[5px] tracking-[-0.45px]">H: 1.12024</span>
    <span class="w-[68px] h-[20px] leading-[19px] border-l border-[#a0a0a0] pl-[6px] tracking-[-0.45px]">L: 1.11993</span>
    <span class="w-[70px] h-[20px] leading-[19px] border-l border-[#a0a0a0] pl-[6px] tracking-[-0.45px]">C: 1.12006</span>
    <span class="w-[67px] h-[20px] leading-[19px] border-l border-[#a0a0a0] pl-[6px] tracking-[-0.45px]">V: 171</span>
    <span class="h-[20px] border-l border-[#a0a0a0] pl-[5px] flex items-center tracking-[-0.4px]"><svg class="w-[24px] h-[14px] mr-[3px]" viewBox="0 0 24 14"><path d="M1 0v9M4 0v8M7 0v7M10 0v6M13 0v5M16 0v4M19 0v3M22 0v2" stroke="#5a7a10" stroke-width="2"/><path d="M1 14v-4M4 14V9M7 14V8M10 14V7M13 14V6M16 14V5M19 14V4M22 14V3" stroke="#1a4a70" stroke-width="2"/></svg>47/0 kb</span>
  </footer>

  <!-- taskbar -->
  <div class="h-[30px] flex items-center relative border-t border-[#123a64] bg-[linear-gradient(90deg,#1c5a92_0,#2a78b8_5%,#3f9fd8_14%,#3fa0da_25%,#4fa8dc_32%,#3a94d2_40%,#2a80c6_55%,#2474bc_68%,#1c68b0_75%,#1c5fa8_86%,#163f70_89%,#163c6c_100%)]">
    <div class="absolute inset-x-0 top-0 h-px bg-white/40"></div>
    <svg class="absolute left-[1310px] top-0 w-[80px] h-[29px]" viewBox="0 0 80 29" fill="none"><path d="M21 0C36 8 48 18 56 29" stroke="#8cc4f0" stroke-opacity=".25" stroke-width="16"/><path d="M22 0C40 9 52 19 60 29" stroke="#b0dcfa" stroke-opacity=".8" stroke-width="7"/></svg>
    <svg class="absolute left-[8px] top-[-5px] w-[38px] h-[36px]" viewBox="0 0 38 36">
      <defs><radialGradient id="orb" cx=".5" cy=".95" r=".9"><stop offset="0" stop-color="#20e0ff"/><stop offset=".4" stop-color="#1c6aa8"/><stop offset=".75" stop-color="#245a88"/><stop offset="1" stop-color="#a8c4d8"/></radialGradient></defs>
      <circle cx="19" cy="19" r="18" fill="url(#orb)" stroke="#1a4468"/>
      <path d="M10 11q4-3 8-1l-2 8q-4-2-8 1z" fill="#f0602a"/><path d="M20 10q4 3 9 0l-2 8q-4 3-9 0z" fill="#8cc83c"/><path d="M8 21q4-3 8-1l-2 7q-4-2-8 1z" fill="#4aa0e8"/><path d="M17.500 20q4 3 9 0l-2 8q-4 3-9 0z" fill="#fcc828"/>
      <ellipse cx="19" cy="9" rx="14" ry="8" fill="#fff" fill-opacity=".22"/>
    </svg>
    <svg class="w-[18px] h-[16px] ml-[72px] mr-[15px]" viewBox="0 0 18 16"><path d="M1 2h6l1 2h8v9H1z" fill="#f3e2a0" stroke="#c8a850"/><path d="M3 1h5v3H3z" fill="#6cc070"/><path d="M3 7h12v7H3z" fill="#f8edb8"/><path d="M3 15V9h12v6h-3v-3H6v3z" fill="#70b8e8"/></svg>
    <div class="w-[43px] h-[29px] mr-[3px] border border-[#1c4a78] rounded-[2px] bg-gradient-to-br from-white/50 to-white/10 inset-ring inset-ring-white/40 flex items-center justify-center"><svg class="w-[15px] h-[15px]" viewBox="0 0 15 15"><circle cx="7.500" cy="7.500" r="7" fill="#e8641a"/><circle cx="8" cy="6.500" r="4.500" fill="#2a4c9c"/><path d="M1 4c1 1 2 1 3 1 2 0 2 1 1 2s1 3 4 2c-1 3-5 3-7 1S0 6 1 4z" fill="#f89a20"/></svg></div>
    <div class="w-[43px] h-[29px] mr-[3px] border border-[#1c4a78] rounded-[2px] bg-gradient-to-br from-white/50 to-white/10 inset-ring inset-ring-white/40 flex items-center justify-center"><svg class="w-[16px] h-[16px]"><use href="#bat"/></svg></div>
    <div class="w-[43px] h-[29px] border border-[#1c4a78] rounded-[2px] bg-gradient-to-br from-white/85 to-white/40 inset-ring inset-ring-white/60 flex items-center justify-center"><svg class="w-[16px] h-[17px]"><use href="#mt"/></svg></div>
    <div class="ml-auto flex items-center text-white text-[12px]">
      <span class="mb-[6px] w-[31px] text-[11px]">RU</span>
      <svg class="w-[8px] h-[5px] mr-[12px]" viewBox="0 0 8 5"><path d="M0 5l4-5 4 5z" fill="#fff"/></svg>
      <svg class="w-[16px] h-[16px] mr-[9px]"><use href="#bat"/></svg>
      <svg class="w-[16px] h-[15px] mr-[8px]" viewBox="0 0 16 15" fill="none" stroke="#fff" stroke-width="1.300"><path d="M5 3.500h10v8H5zM7 14h6M10 12v2M1 1v4h3V1M2.500 5v8h3"/></svg>
      <svg class="w-[16px] h-[15px] mr-[30px]" viewBox="0 0 16 15"><path d="M0 5h3l4-4v13l-4-4H0z" fill="#fff"/><path d="M9 5q2 2.500 0 5M11 3.500q3.500 4 0 8M13.500 2q4 5.500 0 11" fill="none" stroke="#fff"/></svg>
      <span class="w-[53px] tracking-[-0.6px]">15:09</span>
      <div class="w-[13px] h-[28px] border border-[#7a9cc0] bg-white/15 mr-px"></div>
    </div>
  </div>

  <!-- dialog -->
  <section class="absolute left-[677px] top-[164px] w-[617px] h-[627px] rounded-[6px] border border-[#d8dcdc] shadow-[0_2px_14px_6px_rgba(0,0,0,0.6)] bg-[linear-gradient(#8a9294_0,#c8cccc_28%,#b8bcbc_29%,#14242c_29.300%,#1c2c34_100%)] p-[5px] pt-0 flex flex-col text-[11px] tracking-[-0.18px] font-['Liberation_Sans',sans-serif]">
    <div class="absolute inset-x-[1px] top-0 h-[27px] rounded-t-[5px] bg-[linear-gradient(105deg,#7c8488_0,#3a474d_22%,#17252c_36%,#22323a_55%,#14232a_62%,#3a484e_78%,#6f7a7e_90%,#8a9294_100%)]"></div>
    <div class="absolute left-[2px] top-[4px] w-[200px] h-[18px] rounded-full bg-white/45 blur-[5px]"></div>
    <div class="relative h-[27px] flex justify-between">
      <span class="pl-px text-[12px] leading-[26px] font-['Noto_Sans',sans-serif] tracking-[-0.33px]">Custom Indicator - ExtremeTMALine</span>
      <div class="flex h-[19px] mr-[-1px] border border-t-0 border-[#c8ccd0] rounded-b-[4px] overflow-hidden">
        <div class="w-[28px] bg-gradient-to-b from-[#a0a6aa] via-[#6a7478] to-[#7c8488] border-r border-[#c8ccd0] text-white text-[14px] font-bold text-center leading-[17px]">?</div>
        <div class="w-[48px] bg-[linear-gradient(#d89080_0,#c85a44_45%,#a82a14_50%,#c84a30_100%)] flex justify-center items-center"><svg class="w-[12px] h-[11px]" viewBox="0 0 13 12"><path d="M1 1h3.500l2 2.500L8.500 1H12L8.500 6l3.500 5H8.500l-2-2.500-2 2.500H1l3.500-5z" fill="#fff" stroke="#532"/></svg></div>
      </div>
    </div>
    <div class="relative flex-1 bg-[#f0f0f0] border border-[#28343a] outline outline-[#b8c0c0]/60 px-[7px] pt-[6px] flex flex-col">
      <div class="flex items-end h-[21px] pl-[1px] whitespace-nowrap">
        <div class="w-[45px] h-[18px] border border-[#8c8e98] border-b-0 bg-gradient-to-b from-[#f4f4f4] to-[#dcdcdc] text-center leading-[19px]">Общие</div>
        <div class="w-[120px] h-[21px] mb-[-1px] z-10 border border-[#8c8e98] border-b-0 bg-white text-center leading-[19px]">Входные параметры</div>
        <div class="w-[40px] h-[18px] border-t border-r border-[#8c8e98] bg-gradient-to-b from-[#f4f4f4] to-[#dcdcdc] text-center leading-[19px]">Цвета</div>
        <div class="w-[79px] h-[18px] ml-px border border-[#8c8e98] border-b-0 bg-gradient-to-b from-[#f4f4f4] to-[#dcdcdc] text-center leading-[19px]">Отображение</div>
      </div>
      <div class="h-[528px] border border-[#8c8e98] bg-[#f0f0f0] outline-2 -outline-offset-3 outline-white p-[10px] pt-[10px] pr-[9px]">
        <div class="h-[507px] bg-white border border-[#828790]">
          <div class="flex h-[25px] leading-[25px] bg-gradient-to-b from-white from-40% to-[#f2f3f5] border-b border-[#d5d5d5]">
            <span class="w-[283px] pl-[7px] border-r border-[#dedfe1]">Переменная</span><span class="pl-[6px]">Значение</span>
          </div>
          <div id="params"></div>
        </div>
      </div>
      <div class="flex justify-end gap-[7px] mt-[6px] mr-[2px] text-center leading-[20px]">
        <div class="w-[74px] h-[22px] rounded-[3px] border border-[#3c7fb1] inset-ring-2 inset-ring-[#4cc8ec] bg-gradient-to-b from-[#eef4f8] from-50% via-[#d4e0e8] via-50% to-[#c8d8e0]">OK</div>
        <div class="w-[74px] h-[22px] rounded-[3px] border border-[#707070] inset-ring inset-ring-white bg-gradient-to-b from-[#f2f2f2] from-50% via-[#dddddd] via-50% to-[#cfcfcf]">Отмена</div>
        <div class="w-[74px] h-[22px] rounded-[3px] border border-[#707070] inset-ring inset-ring-white bg-gradient-to-b from-[#f2f2f2] from-50% via-[#dddddd] via-50% to-[#cfcfcf]">Сброс</div>
      </div>
      <svg class="absolute right-[1px] bottom-[1px] w-[9px] h-[9px]" viewBox="0 0 9 9" fill="#b0b0b0"><path d="M6 0h2v2H6zM3 3h2v2H3zM6 3h2v2H6zM0 6h2v2H0zM3 6h2v2H3zM6 6h2v2H6z"/></svg>
    </div>
  </section>

  <!-- marked row -->
  <svg class="absolute left-[692px] top-[250px] w-[590px] h-[32px]" viewBox="692 250 590 32" fill="none" stroke="#ed1c24" stroke-width="3" stroke-linejoin="round"><path d="M696 256.500L704 255.500 714 254.500H742V253.500H1228V254.500H1256V256H1273L1277 257.500V272L1274 273.500H1254V275H1218V276H753V275H718V274L700 273.500 696 272.500z"/></svg>

  <script>
    // candle rows: x high top bottom low direction
    const top4 = `12 95 97 108 108 u,21 70 80 95 102 u,31 45 57 78 80 u,40 60 62 92 97 d,59 80 83 90 105 u,68 80 82 86 95 d,77 80 84 92 100 u,105 65 70 80 88 u,124 75 77 95 97 d,133 85 88 92 97 d,142 85 92 97 110 u,151 75 80 92 97 u,160 70 78 83 86 d,169 66 72 82 85 d,178 52 65 80 82 u,188 62 68 75 80 d,197 64 70 80 85 d,206 70 80 97 107 d,215 70 72 95 100 u,224 78 84 90 98 d,234 84 90 94 97 u,243 82 86 94 98 u,261 74 78 86 92 u,280 73 78 102 118 d,289 100 108 112 118 d,298 108 112 158 162 d,307 152 158 170 172 d,316 160 168 180 185 d,326 160 175 182 190 d,335 172 180 188 190 d,344 170 178 190 193 d,353 172 180 192 210 u,363 172 175 184 186 u,372 170 172 190 192 d,381 188 190 325 332 d,390 278 282 320 325 u,399 267 282 310 318 d,409 290 300 312 368 u,418 292 300 342 345 d,427 341 343 518 522 d,436 485 518 534 548 d,446 525 538 562 572 d,455 530 560 567 611 d,464 512 516 560 562 u,473 484 487 515 517 u,483 427 462 487 490 u,492 460 465 518 520 d,501 455 460 517 520 u,510 405 430 458 465 u,519 425 430 475 490 d,529 418 432 478 485 u,538 428 432 492 515 d,547 420 455 490 493 u,556 450 455 515 522 d,566 395 405 515 533 u,575 403 407 420 450 d,584 412 420 452 470 d,593 412 415 465 482 u,602 402 412 415 418 u,621 290 312 415 417 u,630 262 312 322 328 d,640 318 325 345 350 d,649 318 346 412 418 d,658 395 410 440 470 d,667 362 373 438 440 u,676 288 307 362 412 u,686 252 307 340 342 d,695 312 345 362 368 d,704 330 350 385 392 d,714 342 388 412 420 d,723 382 387 412 435 u,741 378 392 410 444 d,750 400 410 413 422 u,760 355 360 410 440 u,769 330 358 408 440 d,778 378 410 428 430 d,788 336 350 425 428 u,797 327 348 353 358 d,806 342 352 360 392 d,815 355 360 422 425 d,824 365 380 422 428 u,833 358 368 380 402 u,843 354 362 430 437 d,852 375 390 430 435 u,861 382 388 442 452 d,870 375 403 440 445 u,880 403 405 482 488 d,889 460 482 490 520 d,898 488 490 585 630 d,907 490 570 590 595 d,916 500 502 583 587 u,926 470 492 520 550 d,935 405 437 545 546 u,944 430 443 465 495 d,953 390 465 478 505 d,963 442 478 560 565 d,972 512 557 660 690 d,981 583 597 662 670 u,990 593 595 715 740 d,1000 655 685 735 748 d,1009 670 672 728 745 u,1018 655 658 675 680 u,1027 652 656 661 692 d,1036 633 660 670 685 d,1046 668 670 845 960 d,1055 812 835 845 927 u,1064 800 835 862 868 d,1073 805 822 865 903 u,1082 800 812 845 862 u,1092 783 815 895 900 d,1101 878 895 910 925 d,1110 885 910 930 978 d,1120 905 910 990 1000 d,1129 920 980 1000 1010 d`;
    const low5 = `1129 0 5 18 25 d,1138 0 15 160 185 d,1147 160 163 437 440 d,1156 433 447 790 795 d,1165 573 685 790 792 u,1174 460 465 683 685 u,1184 303 378 467 475 u,1193 375 380 395 552 d,1202 390 392 435 522 d,1212 358 438 513 550 d,1221 427 516 685 690 d,1230 652 685 773 845 d,1239 672 745 775 803 u,1249 715 742 780 825 d,1258 758 765 780 827 u,1267 622 720 762 790 u,1276 605 652 720 740 u,1285 565 640 655 662 u,1294 388 462 640 668 u,1304 447 462 466 505 u,1313 432 433 463 490 u,1322 370 405 433 455 u,1331 328 358 403 418 u,1341 280 292 358 418 u,1350 235 250 292 345 u,1359 230 240 435 467 d,1368 390 435 567 575 d,1377 450 465 568 570 u,1387 420 465 482 497 d,1396 468 480 485 545 d,1405 480 482 573 628 d,1414 525 573 648 678 d,1424 622 640 663 710 d,1433 660 663 710 762 d,1442 672 675 678 803 u,1451 680 700 728 755 d,1460 650 693 730 732 u,1470 605 695 707 712 d,1479 515 517 708 718 u,1488 480 515 520 605 d,1497 372 397 517 573 u,1507 343 370 395 430 u,1516 348 370 447 455 d,1525 437 447 450 488 u,1534 443 447 602 650 d,1544 537 592 612 630 d,1553 598 605 705 712 d`;
    const last9 = `8 350 375 410 415 u,18 345 365 392 394 u,28 273 322 363 366 u,38 298 318 330 332 u,48 310 318 350 360 d,58 312 332 347 360 u,68 310 328 335 345 d,78 336 337 378 384 d,88 350 358 380 382 u,98 342 355 392 417 d,118 375 390 432 455 d,128 388 390 433 437 u,138 385 390 392 433 u,148 360 388 392 394 u,158 350 355 385 388 u,168 298 307 355 358 u,178 285 293 307 315 u,188 258 262 292 315 u,198 236 238 262 297 u,208 218 240 248 252 d,218 162 165 248 268 u,227 118 168 188 190 d,237 172 178 222 225 d,247 215 217 237 270 d,257 190 220 238 240 u,267 200 213 220 233 u`;
    function candles(id, rows, px) {
      document.getElementById(id).innerHTML = rows.split(',').map(r => {
        const [x, hi, a, b, lo, dir] = r.split(' ');
        const c = dir === 'u' ? '#32cd32' : '#ff0000';
        const fill = dir === 'u' ? '#1c7a24' : '#f01020';
        return `<path vector-effect="non-scaling-stroke" stroke="${c}" d="M${x} ${hi}V${lo}"/><rect vector-effect="non-scaling-stroke" x="${x - px}" y="${a}" width="${px * 2}" height="${Math.max(2, b - a)}" fill="${fill}" stroke="${c}"/>`;
      }).join('');
    }
    candles('candlesTop', top4, 2.3);
    candles('candlesLow', low5, 2.3);
    candles('candlesLast', last9, 2.5);

    // multi-timeframe signal table
    const G = '#00ff00', R = '#ff0000', D = '#008000', O = '#ffa500', T = '#ff6347';
    const rows = [['MACD', 24, [G, R, R, D, D, G, T]], ['STR', 16, [G, R, O, O, G, G, O]], ['EMA', 17, [G, R, R, R, G, G, G]]];
    let s = '';
    [['D1', 40], ['H4', 60], ['H1', 78], ['M30', 96], ['M15', 117], ['M5', 140], ['M1', 159]].forEach(([t, x]) => s += `<text x="${x}" y="107" textLength="${t.length > 2 ? 15.5 : 10.5}" lengthAdjust="spacingAndGlyphs">${t}</text>`);
    rows.forEach(([t, w, cs], r) => {
      cs.forEach((c, i) => s += `<rect x="${37 + i * 20}" y="${112 + r * 8}" width="17" height="5" fill="${c}"/>`);
      s += `<text x="180" y="${117.5 + r * 8}" textLength="${w}" lengthAdjust="spacingAndGlyphs">${t}</text>`;
    });
    document.getElementById('signals').innerHTML = s;

    // news marks
    s = '';
    [[400, [699, 709], 414], [520, [699, 709], 534], [640, [694, 699, 704, 709, 714], 654]].forEach(([x, ys, tx]) => {
      ys.forEach(y => s += `<text x="${x - 4}" y="${y}">★</text>`);
      s += `<text transform="translate(${tx} 709) rotate(-90)" font-family="Liberation Sans" font-size="9" textLength="17" lengthAdjust="spacingAndGlyphs">EUR</text>`;
    });
    document.getElementById('news').innerHTML = s;

    // profit table
    const P = [
      [674, '', [[8, 343, 'Процент прибыли относительно баланса на начало месяца']]],
      [686, '', [[18, 52, 'Прибыль'], [155, 51, 'в пунктах'], [220, 40, 'в лотах'], [320, 50, 'в валюте']]],
      [698, '', [[8, 102, 'Текущая прибыль'], [170, 7, '0'], [225, 24, '0.00'], [290, 24, '0.00'], [360, 37, '0.00 %']]],
      [710, '', [[8, 117, 'Прибыль за сегодня']]],
      [710, '#00ff00', [[170, 14, '29'], [225, 24, '0.03'], [290, 24, '0.87'], [360, 37, '0.77 %']]],
      [722, '', [[8, 134, 'Прибыль за 2016.03.21'], [170, 7, '0'], [225, 24, '0.00'], [290, 24, '0.00'], [360, 37, '0.00 %']]]
    ];
    document.getElementById('profit').innerHTML = '<clipPath id="pc"><rect x="5" y="600" width="600" height="121"/></clipPath><g clip-path="url(#pc)">' + P.map(([y, c, ts]) => ts.map(([x, w, t]) => `<text x="${x}" y="${y}" ${c ? `fill="${c}"` : ''} textLength="${w}" lengthAdjust="spacingAndGlyphs">${t}</text>`).join('')).join('') + '</g>';

    // histogram: end x, top y
    const H = [[127, 898], [197, 899], [250, 898], [286, 897], [348, 896], [424, 895], [451, 894], [491, 892], [527, 891], [545, 889], [585, 887], [634, 884], [679, 883], [790, 882], [892, 880], [933, 881], [962, 883], [1011, 884], [1072, 886], [1104, 887], [1155, 888], [1206, 889], [1292, 891], [1404, 892]];
    s = '';
    for (let x = 4; x < 1402; x += 4) {
      const y = H.find(h => x < h[0])[1];
      s += `<rect x="${x}" y="${y}" width="3" height="${904 - y}" fill="${x < 490 || x > 1326 ? '#daa520' : '#008000'}"/>`;
    }
    document.getElementById('hist').innerHTML = s;

    // currency strength blocks
    const pal = ['#2f78ff', '#2f92ff', '#22aaff', '#20f0f0', '#28f0b0', '#30e860', '#48f030', '#80f830', '#a8ff30', '#d8ff30', '#f8fa30', '#ffe830', '#ffc830', '#ffa830'];
    s = '';
    [[801, 5, 14], [811, 10, 8], [831, 5, 6], [841, 10, 12]].forEach(([y, h, n]) => {
      for (let i = 0; i < n; i++) s += `<rect x="${1710 + i * 7}" y="${y}" width="6" height="${h}" fill="${pal[i]}"/>`;
    });
    s += '<path d="M1710 843.5h84" stroke="#333" stroke-dasharray="3 3"/>';
    document.getElementById('strength').innerHTML = s;

    // price and time axes
    s = '';
    for (let i = 0; i < 20; i++) {
      const y = 79.4 + i * 33.53;
      s += `<path d="M1876 ${Math.round(y)}.5h3" stroke="#fff"/>`;
      if (i !== 10) s += `<text x="1881" y="${Math.round(y) + 4}" textLength="33" lengthAdjust="spacingAndGlyphs">${(1.12625 - i * 0.0004).toFixed(5)}</text>`;
    }
    s += '<rect x="1877" y="398" width="41" height="9" fill="#4b0082"/><text x="1881" y="407" fill="#1e1e1e" textLength="33" lengthAdjust="spacingAndGlyphs">1.12238</text><rect x="1877" y="407" width="41" height="11" fill="#fff"/><text x="1881" y="416.500" fill="#000" textLength="33" lengthAdjust="spacingAndGlyphs">1.12228</text>';
    [['1.3', 730, 13], ['0.9', 748.5, 13], ['0.75', 756.5, 18], ['0.00', 799, 18], ['-0.75', 843.5, 21], ['-0.9', 851.5, 16], ['-1.3', 868.5, 16], ['20.9034', 884.5, 33], ['10', 892, 10], ['0', 898.5, 5], ['0', 914.5, 5], ['-20', 928.5, 13], ['-50', 956.5, 13], ['-80', 985.5, 13], ['-100', 998.5, 18]].forEach(([t, y, w]) => s += `<text x="1879" y="${y + 4}" textLength="${w}" lengthAdjust="spacingAndGlyphs">${t}</text>`);
    for (let i = 0; i < 22; i++) {
      const m = 500 + i * 16;
      const t = i ? `22 Mar ${String(Math.floor(m / 60)).padStart(2, '0')}:${String(m % 60).padStart(2, '0')}` : '22 Mar 2016';
      s += `<path d="M${5 + i * 64}.5 1006v4" stroke="#fff"/><text x="${4 + i * 64}" y="1018" textLength="${i ? 55 : 52}" lengthAdjust="spacingAndGlyphs">${t}</text>`;
    }
    document.getElementById('axis').innerHTML = s;

    // indicator inputs
    const kinds = {
      ab: ['text-[#ecdc78]', 'ab', '#4a3c00'],
      int: ['text-[#8fc0f0]', '123', '#0a2c60'],
      dbl: ['text-[#8fe4f0]', '½', '#0a5068'],
      bool: ['text-[#84ea90]', '', '']
    };
    const params = [['ab', 'TimeFrame', '5'], ['int', 'TMAPeriod', '56'], ['int', 'Price', '0'], ['dbl', 'ATRMultiplier', '2.0'], ['int', 'ATRPeriod', '100'], ['dbl', 'TrendThreshold', '0.5'], ['bool', 'ShowCenterLine', 'false'], ['bool', 'alertsOn', 'false'], ['bool', 'alertsMessage', 'false'], ['bool', 'alertsSound', 'false'], ['bool', 'alertsEmail', 'false']];
    document.getElementById('params').innerHTML = params.map(([k, name, val], i) => {
      const [cls, label, ink] = kinds[k];
      const glyph = k === 'bool'
        ? '<path d="M2 13h3l5-6M9 13h1M12 13h2" stroke="#0a6a1a" stroke-width="1.5" fill="none"/>'
        : `<text x="8" y="${k === 'dbl' ? 11.5 : 13}" text-anchor="middle" font-size="${k === 'int' ? 8 : k === 'ab' ? 10 : 13}" letter-spacing="0" font-weight="700" fill="${ink}">${label}</text>`;
      return `<div class="h-[20px] flex border-b border-[#c8c8c8] leading-[19px] ${i % 2 ? 'bg-white' : 'bg-[#ebebeb]'}">
        <div class="w-[284px] flex items-center pl-[3px] border-r border-[#c8c8c8]"><svg class="w-[16px] h-[17px] mr-[4px] ${cls}" viewBox="0 0 16 19" preserveAspectRatio="none"><use href="#sheet" width="16" height="19"/>${glyph}</svg>${name}</div>
        <span class="${k === 'bool' ? 'pl-[2px]' : 'pl-[3px]'}">${val}</span></div>`;
    }).join('');
  </script>
</body>
</html>
